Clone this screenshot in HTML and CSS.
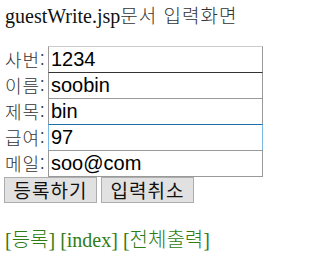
FILE: index.html
```html
<!DOCTYPE html>
<html lang="ko">
  <head>
    <meta charset="UTF-8" />
    <title>guestWrite.jsp</title>
    <link rel="stylesheet" href="styles.css">
  </head>
  <body>
    <div class="title">guestWrite.jsp<span class="kor">문서 입력화면</span></div>

    <form class="guest-form">
      <div class="row">
        <label>사번:</label>
        <input type="text" class="field first" value="1234">
      </div>
      <div class="row">
        <label>이름:</label>
        <input type="text" class="field dark" value="soobin">
      </div>
      <div class="row">
        <label>제목:</label>
        <input type="text" class="field" value="bin">
      </div>
      <div class="row">
        <label>급여:</label>
        <input type="text" class="field focus" value="97">
      </div>
      <div class="row">
        <label>메일:</label>
        <input type="text" class="field" value="soo@com">
      </div>
      <div class="buttons">
        <button type="button" class="btn">등록하기</button>
        <button type="button" class="btn">입력취소</button>
      </div>
    </form>

    <div class="links">
      <a href="#">[<span class="kor-serif">등록</span>]</a>
      <a href="#">[index]</a>
      <a href="#">[<span class="kor-serif">전체출력</span>]</a>
    </div>
  </body>
</html>
```

FILE: styles.css
```css
* {
  box-sizing: border-box;
}

body {
  margin: 0;
  padding: 3px 5px;
  font-family: "Liberation Serif", "Noto Sans CJK KR", serif;
  font-size: 20px;
  color: #111;
}

.title {
  height: 43px;
  line-height: 24px;
}

.kor {
  font-family: "Noto Sans CJK KR", sans-serif;
  font-weight: 300;
  font-size: 19px;
  letter-spacing: 1px;
  color: #333;
}

.guest-form {
  margin: 0;
}

.row {
  display: flex;
  align-items: center;
  height: 26px;
}

.row label {
  width: 43px;
  font-family: "Noto Sans CJK KR", sans-serif;
  font-weight: 300;
  font-size: 18px;
  letter-spacing: 1px;
  color: #333;
  white-space: nowrap;
}

.field {
  width: 215px;
  height: 27px;
  margin: 0;
  padding: 0 2px;
  border: 1px solid #999;
  font-family: "Liberation Sans", Arial, sans-serif;
  font-size: 20px;
  color: #000;
  background: #fff;
}

.field.first {
  border-top-color: #ccc;
}

.field.dark {
  border-top-color: #333;
}

.field.focus {
  border-color: #7ab8e8;
  border-top-color: #1f6fa8;
  outline: none;
}

.buttons {
  display: flex;
  gap: 4px;
  margin-top: 1px;
  margin-left: -1px;
}

.btn {
  width: 93px;
  height: 26px;
  padding: 0;
  font-family: "Noto Sans CJK KR", sans-serif;
  font-size: 19px;
  line-height: 22px;
  letter-spacing: 1px;
  color: #111;
  background: #e1e1e1;
  border: 1px solid #adadad;
  border-radius: 0;
}

.links {
  margin-top: 21px;
  color: #2e7d15;
}

.links a {
  color: #2e7d15;
  text-decoration: none;
}

.kor-serif {
  font-weight: 300;
}
```
